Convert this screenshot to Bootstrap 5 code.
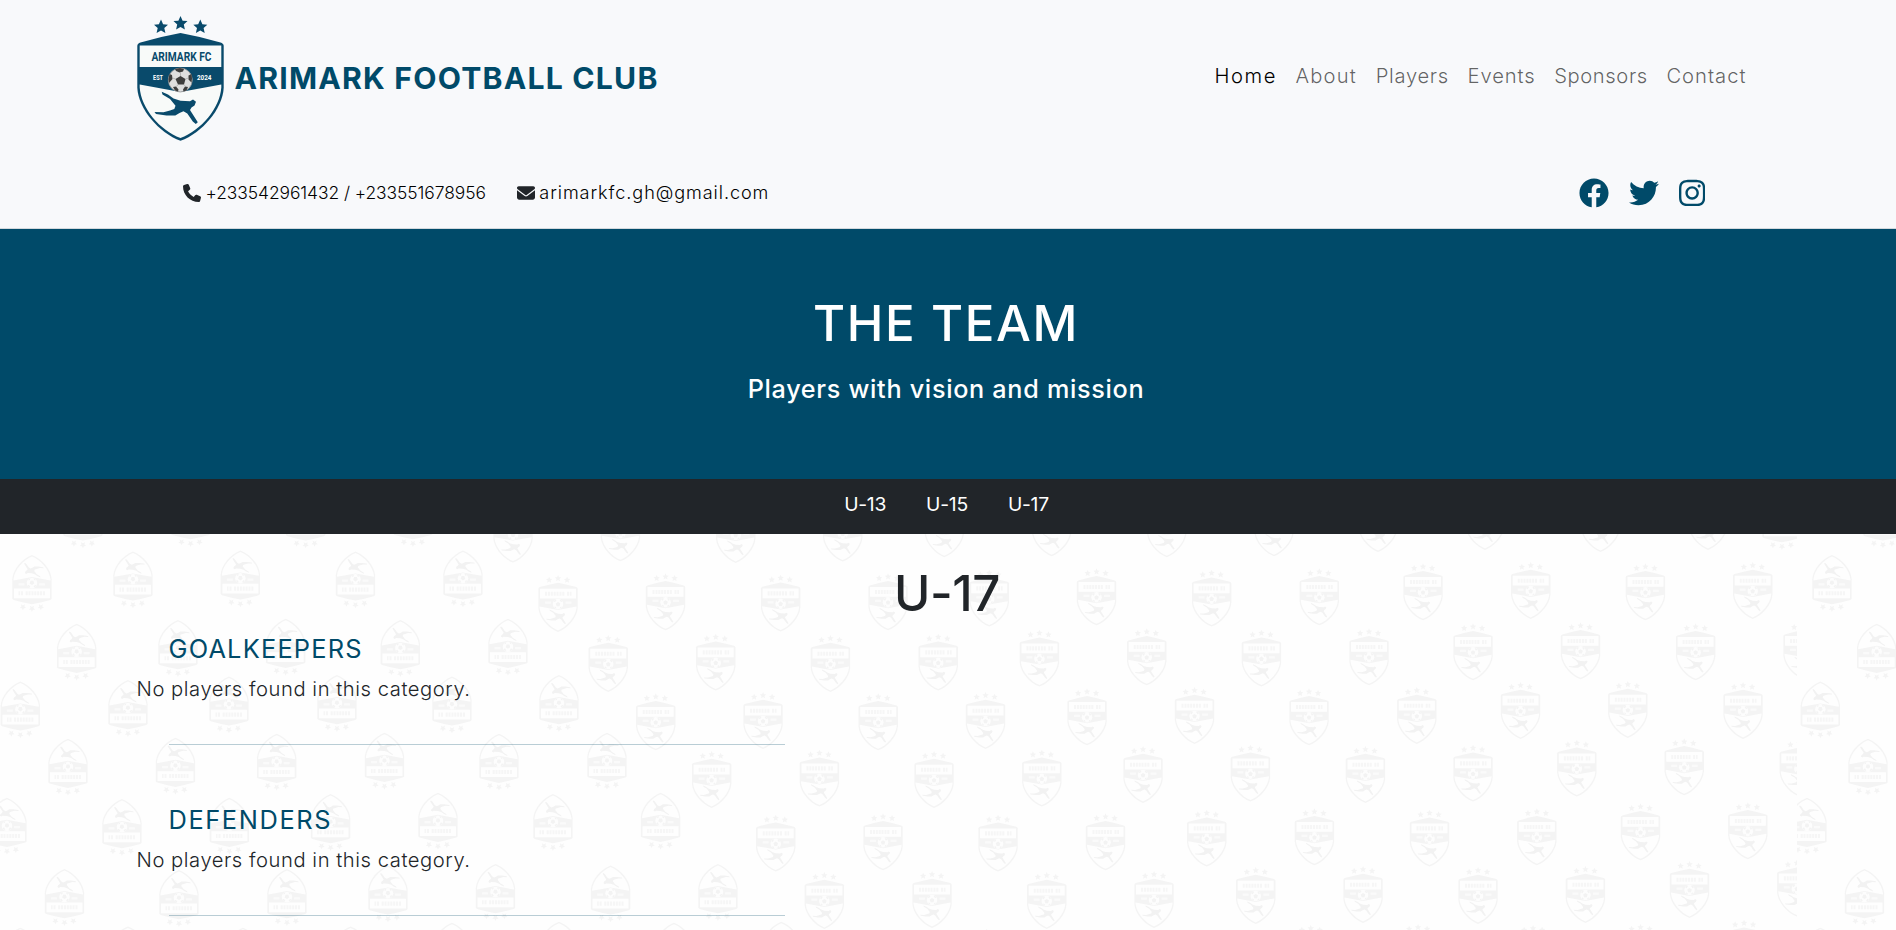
<!DOCTYPE html>
<html lang="en">
<head>
<meta charset="utf-8">
<meta name="viewport" content="width=device-width, initial-scale=1">
<title>Arimark Football Club - The Team</title>
<link href="https://cdn.jsdelivr.net/npm/bootstrap@5.3.0/dist/css/bootstrap.min.css" rel="stylesheet">
<style>
  :root { --club: #004a69; }
  body { font-family: Inter, "Liberation Sans", sans-serif; font-size: 20.2px; font-weight: 300; line-height: 30px; overflow: hidden; height: 100vh; }
  .page-wrap { max-width: 1624px; margin: 0 auto; }
  .site-head { height: 229px; border-bottom: 1px solid #d3d9dd; background: #f8f9fb; }
  .brand-row { padding-top: 16px; height: 141px; }
  .brand-row .navbar-brand { gap: 10.5px; }
  .club-title { font-size: 30.2px; font-weight: 700; letter-spacing: 1.2px; color: var(--club); padding-bottom: 1px; }
  .main-nav { gap: 18.6px; margin-right: 13.5px; padding-bottom: 6px; }
  .main-nav .nav-link { padding: 0; color: rgba(0,0,0,.62); white-space: nowrap; }
  .main-nav .nav-link.active { color: #000; }
  .contact-row { padding: 36px 55px 0 46.5px; color: #000; font-size: 17.4px; }
  .contact-row .c-icon { width: 18px; height: 18px; fill: #212529; }
  .contact-row .mail { font-size: 18.1px; letter-spacing: .92px; margin-left: 4.5px; padding-bottom: 1px; }
  .social a { display: flex; color: var(--club); }
  .hero { height: 250px; background: var(--club); padding: 64px 4px 0 0; color: #fff; }
  .hero h1, .squad-title { font-size: 49.2px; line-height: 60px; font-weight: 500; }
  .hero h1 { letter-spacing: 1.6px; margin-bottom: 20.5px; }
  .hero p { font-size: 25.2px; font-weight: 500; letter-spacing: .7px; }
  .age-nav { height: 55px; background: #212529; padding: 10px 3px 0 0; gap: 40px; font-size: 19.3px; }
  .age-nav a { color: #fff; text-decoration: none; font-weight: 400; letter-spacing: -.25px; }
  .squad-area { height: 396px; background: #fefefe; overflow: hidden; position: relative; }
  .crest-bg { position: absolute; inset: 0; width: 100%; height: 100%; }
  .squad-content { position: relative; padding-top: 29px; color: #212529; }
  .squad-title { letter-spacing: -.4px; margin-bottom: 11px; padding-right: 2px; }
  .group-block { margin-bottom: 60px; }
  .group-block h2 { font-size: 25.4px; line-height: 30px; font-weight: 400; color: var(--club); margin: 0 0 10px 32.5px; letter-spacing: 1.2px; }
  .group-block p { letter-spacing: .55px; margin: 0 0 40px .5px; }
  .group-block hr { margin: 0 0 0 33px; width: 616px; border-top: 1px solid var(--club); opacity: .27; }
</style>
</head>
<body>
<svg width="0" height="0" class="position-absolute">
  <defs>
    <polygon id="star" points="0,-7.2 2.1,-2.5 7,-2.1 3.3,1.3 4.4,6.3 0,3.7 -4.4,6.3 -3.3,1.3 -7,-2.1 -2.1,-2.5"/>
    <path id="player" d="M24.7 75.8L31 78.6 36.5 82.5 43.5 84.8 53 85.3 56 83.6 59 85.8 57.5 89.4 54.5 91.5 53 94 56.5 99.5 60.8 106.3 58.8 108 55.8 105.5 50.3 97.5 46.5 95.3 42.5 97 38.3 99.6 29.5 99.6 19 98 17.5 96 26.5 96.3 33 94.5 37.3 93 38.5 89.8 33 83 25.5 78.5Z"/>
    <g id="shield">
      <use href="#star" x="24" y="10.8"/><use href="#star" x="43.5" y="7.2"/><use href="#star" x="63.3" y="10.8"/>
      <path d="M43.5 17Q63 20.500 83.500 26.500Q86.700 27.500 86.700 30L86.700 72C85.500 93 65 117 43.500 124.800C22 117 1.500 93 .3 72L.3 30Q.3 27.500 3.500 26.500Q24 20.500 43.500 17Z"/>
    </g>
    <g id="mark">
      <use href="#shield" fill="#f4f4f4"/>
      <path fill="#fefefe" d="M4 30H83V51.500H4ZM3 69L43.500 76.500 84 69V72C82 92 63 114 43.500 121.500C24 114 5 92 3 72Z"/>
      <path d="M15 41H58M63 41H73" stroke="#f6f6f6" stroke-width="9" stroke-dasharray="4.500 1.800"/>
      <path d="M15 60.500H28M60 60.500H73" stroke="#fafafa" stroke-width="5"/>
      <circle cx="43.500" cy="63.500" r="11.500" fill="#fdfdfd"/>
      <path fill="#f3f3f3" d="M43.500 59l5 3.500-2 6h-6l-2-6zM34 58l3-4 3 1-3 5zM53 58l-3-4-3 1 3 5zM36 72l0-3 3 1 1 4zM51 72l0-3-3 1-1 4z"/>
      <use href="#player" fill="#f2f2f2"/>
    </g>
    <g id="u"><use href="#mark" transform="scale(.456)"/></g>
    <g id="d"><use href="#mark" transform="translate(39.600 57) rotate(180) scale(.456)"/></g>
  </defs>
</svg>

<header class="site-head">
  <div class="page-wrap">
    <nav class="brand-row d-flex align-items-center justify-content-between">
      <a class="navbar-brand d-flex align-items-center m-0 p-0" href="#">
        <svg width="88" height="125" viewBox="-1 0 88 125">
          <use href="#shield" fill="#094a6b"/>
          <path fill="#f8faf9" d="M2.700 29.500H84.300V51H2.700ZM2.700 68.500L43.500 76 84.300 68.500V71.500C83 92 64 114.500 43.500 122C23 114.500 4 92 2.700 71.500Z"/>
          <text x="14.500" y="44.800" font-family="Roboto" font-size="12.500" font-weight="700" fill="#094a6b" textLength="60" lengthAdjust="spacingAndGlyphs">ARIMARK FC</text>
          <text x="16" y="64" font-family="Roboto" font-size="7" font-weight="700" fill="#fff" textLength="10" lengthAdjust="spacingAndGlyphs">EST</text>
          <text x="60" y="64" font-family="Roboto" font-size="7" font-weight="700" fill="#fff" textLength="14.500" lengthAdjust="spacingAndGlyphs">2024</text>
          <circle cx="43.300" cy="64" r="12" fill="#dedede" stroke="#8a8a8a" stroke-width=".7"/>
          <path fill="#3d3d3d" d="M43.500 60l5 3-1.500 5.500h-6l-2.500-5.500zM38 53l5-1 4 1-1 2.500-3.500 1-3.500-1.500zM32.500 58l2.500 1 .5 4-3.500 4-.5-4zM54.500 58l-3 1.500 0 4 3 3 .5-4zM36 71l3-.5 2.500 3-.5 2-3-1zM51 71l-3-.5-2 3 .5 2 3-1z"/>
          <path fill="none" stroke="#999" stroke-width=".6" d="M43.500 56.500V60M48.500 63l3-1M47 68.500l1.500 2M41 68.500l-1.500 2M38.500 63l-3-1"/>
          <use href="#player" fill="#094a6b"/>
        </svg>
        <span class="club-title">ARIMARK FOOTBALL CLUB</span>
      </a>
      <ul class="main-nav nav flex-nowrap">
        <li><a class="nav-link active" style="letter-spacing:1.5px" href="#">Home</a></li>
        <li><a class="nav-link" style="letter-spacing:1.2px" href="#">About</a></li>
        <li><a class="nav-link" style="letter-spacing:.7px" href="#">Players</a></li>
        <li><a class="nav-link" style="letter-spacing:.9px" href="#">Events</a></li>
        <li><a class="nav-link" style="letter-spacing:.6px" href="#">Sponsors</a></li>
        <li><a class="nav-link" style="letter-spacing:1px" href="#">Contact</a></li>
      </ul>
    </nav>
    <div class="contact-row d-flex justify-content-between align-items-center">
      <div class="d-flex align-items-center">
        <svg class="c-icon" viewBox="0 0 512 512"><path d="M164.900 24.600c-7.700-18.600-28-28.500-47.400-23.200l-88 24C12.100 30.200 0 46 0 64C0 311.400 200.600 512 448 512c18 0 33.800-12.100 38.600-29.500l24-88c5.300-19.400-4.600-39.700-23.200-47.400l-96-40c-16.300-6.800-35.200-2.100-46.300 11.600L304.700 368C234.300 334.700 177.300 277.700 144 207.300L193.300 167c13.700-11.200 18.400-30 11.600-46.300l-40-96z"/></svg>
        <span style="margin-left:5px;letter-spacing:-.06px">+233542961432 / +233551678956</span>
        <svg class="c-icon" style="margin-left:31px" viewBox="0 0 512 512"><path d="M48 64C21.500 64 0 85.500 0 112c0 15.100 7.100 29.300 19.200 38.400L236.800 313.600c11.400 8.500 27 8.500 38.400 0L492.800 150.400c12.100-9.100 19.200-23.300 19.200-38.400c0-26.500-21.500-48-48-48H48zM0 176V384c0 35.300 28.700 64 64 64H448c35.300 0 64-28.700 64-64V176L294.400 339.200c-22.800 17.100-54 17.100-76.800 0L0 176z"/></svg>
        <span class="mail">arimarkfc.gh@gmail.com</span>
      </div>
      <div class="social d-flex" style="gap:20px">
        <a href="#"><svg width="30" height="30" viewBox="0 0 512 512" fill="currentColor"><path d="M504 256C504 119 393 8 256 8S8 119 8 256c0 123.780 90.690 226.380 209.250 245V327.690h-63V256h63v-54.640c0-62.150 37-96.480 93.670-96.480 27.140 0 55.520 4.840 55.520 4.840v61h-31.280c-30.800 0-40.410 19.120-40.410 38.730V256h68.780l-11 71.690h-57.780V501C413.310 482.380 504 379.780 504 256z"/></svg></a>
        <a href="#"><svg width="30" height="30" viewBox="0 0 512 512" fill="currentColor"><path d="M459.370 151.716c.325 4.548.325 9.097.325 13.645 0 138.720-105.583 298.558-298.558 298.558-59.452 0-114.680-17.219-161.137-47.106 8.447.974 16.568 1.299 25.340 1.299 49.055 0 94.213-16.568 130.274-44.832-46.132-.975-84.792-31.188-98.112-72.772 6.498.974 12.995 1.624 19.818 1.624 9.421 0 18.843-1.300 27.614-3.573-48.081-9.747-84.143-51.980-84.143-102.985v-1.299c13.969 7.797 30.214 12.670 47.431 13.319-28.264-18.843-46.781-51.005-46.781-87.391 0-19.492 5.197-37.360 14.294-52.954 51.655 63.675 129.300 105.258 216.365 109.807-1.624-7.797-2.599-15.918-2.599-24.040 0-57.828 46.782-104.934 104.934-104.934 30.213 0 57.502 12.670 76.670 33.137 23.715-4.548 46.456-13.320 66.599-25.340-7.798 24.366-24.366 44.833-46.132 57.827 21.117-2.273 41.584-8.122 60.426-16.243-14.292 20.791-32.161 39.308-52.628 54.253z"/></svg></a>
        <a href="#"><svg width="26.250" height="30" viewBox="0 0 448 512" fill="currentColor"><path d="M224.100 141c-63.600 0-114.900 51.300-114.900 114.900s51.300 114.900 114.900 114.900S339 319.500 339 255.900 287.700 141 224.100 141zm0 189.600c-41.100 0-74.700-33.500-74.700-74.700s33.500-74.700 74.700-74.700 74.700 33.500 74.700 74.700-33.600 74.700-74.700 74.700zm146.400-194.300c0 14.900-12 26.800-26.800 26.800-14.900 0-26.800-12-26.800-26.800s12-26.800 26.800-26.800 26.800 12 26.800 26.800zm76.100 27.200c-1.700-35.900-9.900-67.700-36.200-93.900-26.200-26.200-58-34.400-93.900-36.200-37-2.100-147.900-2.100-184.900 0-35.800 1.700-67.600 9.900-93.900 36.100s-34.400 58-36.200 93.900c-2.100 37-2.100 147.900 0 184.900 1.700 35.900 9.900 67.700 36.200 93.900s58 34.400 93.900 36.200c37 2.100 147.900 2.100 184.900 0 35.900-1.700 67.700-9.900 93.900-36.200 26.200-26.200 34.400-58 36.200-93.900 2.100-37 2.100-147.800 0-184.800zM398.800 388c-7.800 19.600-22.900 34.700-42.600 42.600-29.500 11.700-99.500 9-132.100 9s-102.700 2.600-132.100-9c-19.600-7.800-34.700-22.900-42.600-42.600-11.700-29.500-9-99.500-9-132.100s-2.600-102.700 9-132.100c7.800-19.600 22.900-34.700 42.600-42.600 29.500-11.700 99.500-9 132.100-9s102.700-2.600 132.100 9c19.600 7.800 34.700 22.900 42.600 42.600 11.700 29.500 9 99.500 9 132.100s2.700 102.700-9 132.100z"/></svg></a>
      </div>
    </div>
  </div>
</header>

<section class="hero text-center">
  <h1>THE TEAM</h1>
  <p class="m-0">Players with vision and mission</p>
</section>

<nav class="age-nav d-flex justify-content-center">
  <a href="#">U-13</a><a href="#">U-15</a><a href="#">U-17</a>
</nav>

<main class="squad-area">
  <svg class="crest-bg" id="crests" aria-hidden="true">
    <clipPath id="tile"><rect x="-3" y="0" width="1800" height="396"/></clipPath>
    <g id="tileArt"><g id="crestTile" clip-path="url(#tile)"></g></g>
    <use href="#tileArt" x="1800"/>
  </svg>
  <div class="squad-content page-wrap">
    <h1 class="squad-title text-center">U-17</h1>
    <section class="group-block">
      <h2>GOALKEEPERS</h2>
      <p>No players found in this category.</p>
      <hr>
    </section>
    <section class="group-block">
      <h2 style="letter-spacing:1.6px">DEFENDERS</h2>
      <p>No players found in this category.</p>
      <hr>
    </section>
  </div>
</main>

<script>
  // Crest positions in the wallpaper tile: centre x, top y
  const flipped = [[83,-42.7],[190.6,-44],[305.7,-42.7],[413,-44],[1782,-41],
    [32,21],[133,17.3],[240.4,16.3],[355.5,17.3],[463,16.3],
    [76.7,89.7],[178,86],[285.7,84.7],[400.4,86],[508,84.7],
    [20.4,147.3],[128,146],[229,142.3],[337,141],[452,142.3],[559,141],
    [68,204.7],[175.5,203.7],[276.7,199.7],[384.5,198.7],[499,199.7],[607,198.7],
    [7,263.7],[122,265],[229.4,263.7],[330.6,260],[438,258.7],[553,260],[660.6,258.7],
    [64.5,335],[179,336],[287,335],[388,331.3],[495.5,330],[610.6,331.3],[718,330],
    [20.4,393.7],[128,392.3],[243,393.7],[350.6,392.3],[452,388.7],[559,387.7],[674,388.7],[781.4,387.7]];
  const upright = [[513,-28.3],[620.4,-29.7],[735.7,-28],[842.7,-29.3],[944.3,-33.7],[1051.6,-34.7],[1166.7,-33.7],[1274,-34.7],[1378,-39],[1485,-41],[1600.5,-39],[1708,-41],
    [558,41],[665.5,39.3],[780.6,40.7],[888,39.3],[989.2,35.7],[1096.5,34.3],[1211.6,35.7],[1319.3,34.3],[1423,29.3],[1530.7,28],[1645.4,29.3],[1752.7,28],
    [608.2,101],[715.7,99.7],[830.4,101],[938.2,99.7],[1039.4,95.7],[1146.7,94.3],[1261.4,95.7],[1369,94.3],[1473,89.3],[1580.5,88.3],[1695.6,89.3],[1803,88.3],
    [655.7,159.3],[763,158],[878.2,159.3],[985.5,158],[1087,154.3],[1194.5,153],[1309,154.3],[1416.8,153],[1520.5,148],[1627.8,147],[1743,148],
    [711.6,217],[819.4,215.7],[934,217],[1041.8,215.7],[1143,212],[1250.4,210.7],[1365.4,212],[1473,210.7],[1576.8,205.7],[1684.2,204.3],[1799.3,205.7],
    [775.7,280.7],[883,279.3],[998,280.7],[1105.5,279.3],[1206.7,275.7],[1314.4,274.3],[1429.5,275.7],[1536.8,274.3],[1640.5,269.3],[1747.8,268.3],
    [824.3,338],[932,337],[1046.7,338],[1154,337],[1255.7,333],[1363,332],[1478,333],[1585.4,332],[1689.5,327],[1796.8,325.7],
    [986.7,394.7],[1310.7,391],[1418,390],[1533,391],[1640.5,390],[1744,385.7]];
  const tile = document.getElementById('crestTile');
  const put = (id, list) => list.forEach(([x, y]) => {
    const u = document.createElementNS('http://www.w3.org/2000/svg', 'use');
    u.setAttribute('href', '#' + id);
    u.setAttribute('x', x - 19.8);
    u.setAttribute('y', y);
    tile.appendChild(u);
  });
  put('d', flipped);
  put('u', upright);
</script>
<script src="https://cdn.jsdelivr.net/npm/bootstrap@5.3.0/dist/js/bootstrap.bundle.min.js"></script>
</body>
</html>
